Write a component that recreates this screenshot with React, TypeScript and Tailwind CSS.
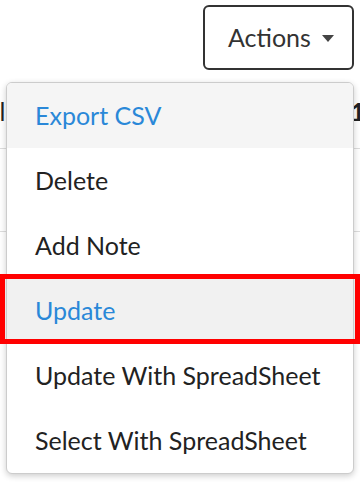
import { useState } from 'react';

const items = [
  'Export CSV',
  'Delete',
  'Add Note',
  'Update',
  'Update With SpreadSheet',
  'Select With SpreadSheet',
];

export default function App() {
  const [hovered] = useState(0);
  const highlighted = 3;

  return (
    <div className="relative w-[360px] h-[483px] overflow-hidden bg-white font-['Lato','Noto_Sans',sans-serif] text-[#222]">
      {/* top bar with the Actions button */}
      <div className="flex justify-end pt-[5px] pr-[6px] h-[76px]">
        <button className="flex items-center gap-[11px] h-[65px] w-[151px] pl-[23px] border-2 border-[#333] rounded-md text-[25px] text-[#333] bg-white">
          Actions
          <svg width="12" height="7" viewBox="0 0 12 7" className="mt-[2px]">
            <path d="M0 0h12L6 7z" fill="#444" />
          </svg>
        </button>
      </div>

      {/* table rows underneath */}
      <div className="flex justify-between items-center h-[73px] border-b border-[#ddd] text-[25px]">
        <span className="-ml-[13px]">al</span>
        <span className="font-bold -mr-[5px]">1</span>
      </div>
      <div className="h-[83px] border-b border-[#ddd]" />

      {/* dropdown menu */}
      <div className="absolute left-[6px] top-[82px] w-[348px] rounded-md border border-[#ccc] bg-white shadow-[0_2px_6px_rgba(0,0,0,0.2)] overflow-hidden">
        {items.map((label, i) => (
          <div
            key={label}
            className={`flex items-center h-[65px] pl-[28px] text-[25px] ${
              i === hovered ? 'bg-[#f5f5f5] text-[#2a88d8]' : i === highlighted ? 'bg-[#f1f1f1] text-[#2a88d8]' : 'text-[#222]'
            }`}
          >
            {label}
          </div>
        ))}
      </div>

      {/* annotation box */}
      <div className="absolute left-0 top-[274px] w-[360px] h-[70px] border-[5px] border-[#ff0000]" />
    </div>
  );
}
